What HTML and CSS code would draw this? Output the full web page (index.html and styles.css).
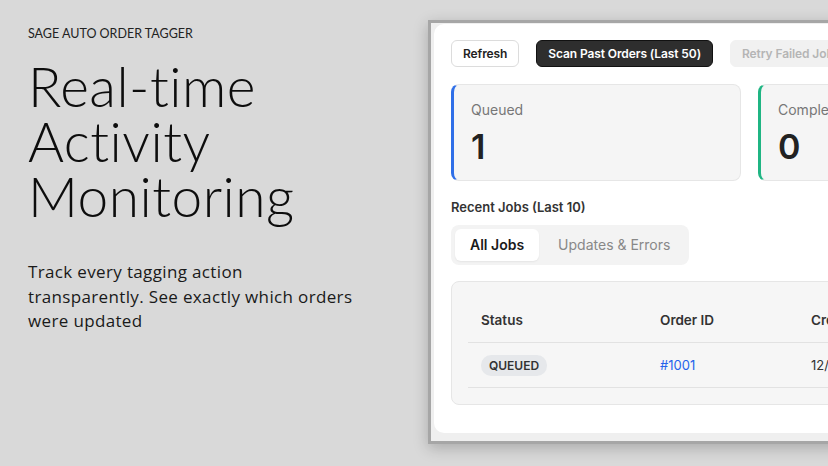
FILE: index.html
```html
<!DOCTYPE html>
<html lang="en">
<head>
  <meta charset="UTF-8">
  <meta name="viewport" content="width=device-width, initial-scale=1.0">
  <title>Sage Auto Order Tagger</title>
  <link rel="stylesheet" href="styles.css">
</head>
<body>
  <div class="intro">
    <p class="eyebrow">SAGE AUTO ORDER TAGGER</p>
    <h1>Real-time Activity Monitoring</h1>
    <p class="lead">Track every tagging action transparently. See exactly which orders were updated</p>
  </div>

  <div class="window">
    <div class="app">
      <div class="actions">
        <button class="btn">Refresh</button>
        <button class="btn btn-dark">Scan Past Orders (Last 50)</button>
        <button class="btn btn-disabled">Retry Failed Jobs</button>
      </div>

      <div class="stats">
        <div class="stat stat-blue">
          <span class="stat-label">Queued</span>
          <span class="stat-value">1</span>
        </div>
        <div class="stat stat-green">
          <span class="stat-label">Completed</span>
          <span class="stat-value">0</span>
        </div>
      </div>

      <h3 class="section-title">Recent Jobs (Last 10)</h3>
      <div class="tabs">
        <span class="tab active">All Jobs</span>
        <span class="tab">Updates &amp; Errors</span>
      </div>

      <div class="table-card">
        <div class="row head">
          <span>Status</span>
          <span>Order ID</span>
          <span>Created</span>
        </div>
        <div class="row">
          <span><span class="pill">QUEUED</span></span>
          <span><a href="#" class="order-link">#1001</a></span>
          <span>12/04/2024</span>
        </div>
      </div>
    </div>
  </div>
</body>
</html>
```

FILE: styles.css
```css
body {
  margin: 0;
  height: 466px;
  overflow: hidden;
  background-color: #d9d9d9;
  display: flex;
  font-family: 'Inter', 'Liberation Sans', sans-serif;
}
.intro {
  width: 400px;
  flex-shrink: 0;
  padding: 26px 0 0 28px;
  color: #111;
}
.eyebrow {
  margin: 0;
  font-family: 'Lato', 'DejaVu Sans', sans-serif;
  font-size: 12.5px;
  color: #222;
}
h1 {
  margin: 18px 0 0;
  font-family: 'Lato', 'DejaVu Sans', sans-serif;
  font-weight: 300;
  font-size: 55px;
  line-height: 55px;
  letter-spacing: 0.5px;
  width: 330px;
  color: #0d0d0d;
}
.lead {
  margin: 36px 0 0;
  width: 328px;
  font-family: 'Open Sans', 'DejaVu Sans', sans-serif;
  font-size: 17px;
  line-height: 24.5px;
  letter-spacing: 0.35px;
  color: #1a1a1a;
}
.window {
  flex-shrink: 0;
  width: 420px;
  height: 409px;
  margin-top: 20px;
  border: 3px solid #a6a6a6;
  border-right: none;
  background: #efefef;
  padding: 1px 0 8px 3px;
  box-shadow: 0 4px 14px rgba(0, 0, 0, 0.22);
}
.app {
  height: 100%;
  box-sizing: border-box;
  background: white;
  border-radius: 10px 0 0 10px;
  padding: 16px 0 0 17px;
}
.actions {
  display: flex;
  gap: 17px;
  white-space: nowrap;
}
.btn {
  flex-shrink: 0;
  height: 27px;
  padding: 0 11px;
  border: 1px solid #dcdcdc;
  border-radius: 6px;
  background: white;
  font-family: inherit;
  font-size: 12px;
  font-weight: 600;
  letter-spacing: -0.1px;
  color: #222;
}
.btn-dark {
  background: #2e2e2e;
  border-color: #111;
  color: white;
}
.btn-disabled {
  background: #f1f1f1;
  border-color: #f1f1f1;
  color: #b5b5b5;
}
.stats {
  display: flex;
  gap: 17px;
  margin-top: 17px;
}
.stat {
  flex-shrink: 0;
  width: 290px;
  height: 97px;
  box-sizing: border-box;
  background: #f5f5f5;
  border: 1px solid #e6e6e6;
  border-left: 3px solid #2f6fe8;
  border-radius: 8px;
  padding: 16px 0 0 17px;
  display: flex;
  flex-direction: column;
}
.stat-green {
  border-left-color: #1fb583;
}
.stat-label {
  font-size: 14px;
  color: #777;
}
.stat-value {
  margin-top: 8px;
  font-size: 34px;
  font-weight: 600;
  color: #222;
}
.section-title {
  margin: 18px 0 0;
  font-size: 13px;
  font-weight: 600;
  color: #333;
}
.tabs {
  display: inline-flex;
  gap: 4px;
  margin-top: 10px;
  padding: 4px;
  background: #f3f3f3;
  border-radius: 8px;
}
.tab {
  padding: 7px 15px 8px;
  font-size: 14px;
  color: #888;
  border-radius: 6px;
}
.tab.active {
  background: white;
  color: #1a1a1a;
  font-weight: 600;
  box-shadow: 0 1px 2px rgba(0, 0, 0, 0.06);
}
.table-card {
  width: 420px;
  margin-top: 16px;
  padding: 16px 0 16px 16px;
  background: #f6f6f6;
  border: 1px solid #e6e6e6;
  border-radius: 8px;
  box-sizing: border-box;
}
.row {
  display: grid;
  grid-template-columns: 179px 151px 1fr;
  height: 44px;
  align-items: center;
  padding-left: 13px;
  border-bottom: 1px solid #e2e2e2;
  font-size: 13px;
  color: #333;
  white-space: nowrap;
}
.row.head {
  font-weight: 600;
  font-size: 13.5px;
}
.pill {
  display: inline-block;
  padding: 3px 8px;
  background: #e6e8eb;
  border-radius: 10px;
  font-size: 12px;
  font-weight: 600;
  color: #333;
}
.order-link {
  color: #2563eb;
  text-decoration: none;
}
```
